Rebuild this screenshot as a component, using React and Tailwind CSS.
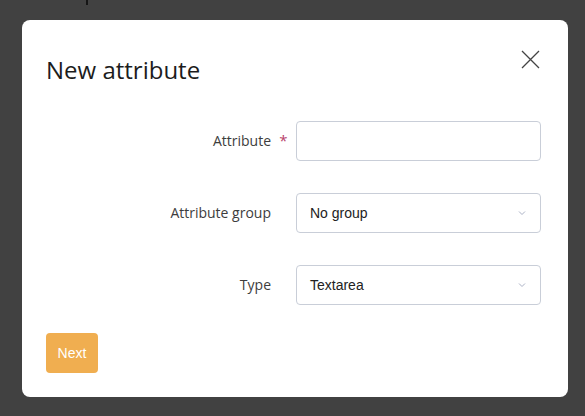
import React from 'react';

function Chevron() {
  return (
    <svg width="8" height="5" viewBox="0 0 8 5" className="absolute right-[14px] top-1/2 -translate-y-1/2">
      <path d="M1 1 L4 4 L7 1" fill="none" stroke="#aab1c4" strokeWidth="1" />
    </svg>
  );
}

function Field({ label, required, children }) {
  return (
    <div className="flex items-center h-10">
      <div className="w-[225px] text-right text-[14px] text-[#3d3d3d] font-['Open_Sans',sans-serif] -mt-[2px]">{label}</div>
      <div className="w-[25px] flex justify-center">
        {required && <span className="text-[#b8426b] text-[15px] font-['Open_Sans',sans-serif] -mt-[2px]">*</span>}
      </div>
      {children}
    </div>
  );
}

function SelectBox({ value }) {
  return (
    <div className="relative w-[245px] h-10 rounded-[4px] border border-[#c9ced8] bg-white flex items-center pl-[13px] text-[14px] text-[#222] font-['Liberation_Sans',Arial,sans-serif]">
      {value}
      <Chevron />
    </div>
  );
}

export default function App() {
  return (
    <div className="relative w-[585px] h-[416px] bg-[#414141] overflow-hidden pt-[20px] pl-[22px]">
      <div className="absolute left-[86px] top-0 w-[2px] h-[5px] bg-[#151515]" />
      <div className="w-[546px] h-[377px] bg-white rounded-[8px] pl-[24px] pr-[27px] pt-[43px] flex flex-col">
        <div className="flex items-start justify-between h-[58px]">
          <h1 className="text-[24px] leading-[30px] text-[#1c1c1c] font-['Open_Sans',sans-serif] -mt-[8px]">New attribute</h1>
          <svg width="19" height="19" viewBox="0 0 19 19" className="-mt-[13px] mr-[1px]">
            <path d="M1 1 L18 18 M18 1 L1 18" stroke="#444" strokeWidth="1.3" fill="none" />
          </svg>
        </div>
        <div className="flex flex-col gap-[32px]">
          <Field label="Attribute" required>
            <input className="w-[245px] h-10 rounded-[4px] border border-[#c9ced8] bg-white outline-none" />
          </Field>
          <Field label="Attribute group">
            <SelectBox value="No group" />
          </Field>
          <Field label="Type">
            <SelectBox value="Textarea" />
          </Field>
        </div>
        <div className="mt-[28px]">
          <button className="w-[52px] h-10 rounded-[4px] bg-[#f0ae50] text-white text-[14px] font-['Liberation_Sans',Arial,sans-serif]">Next</button>
        </div>
      </div>
    </div>
  );
}
